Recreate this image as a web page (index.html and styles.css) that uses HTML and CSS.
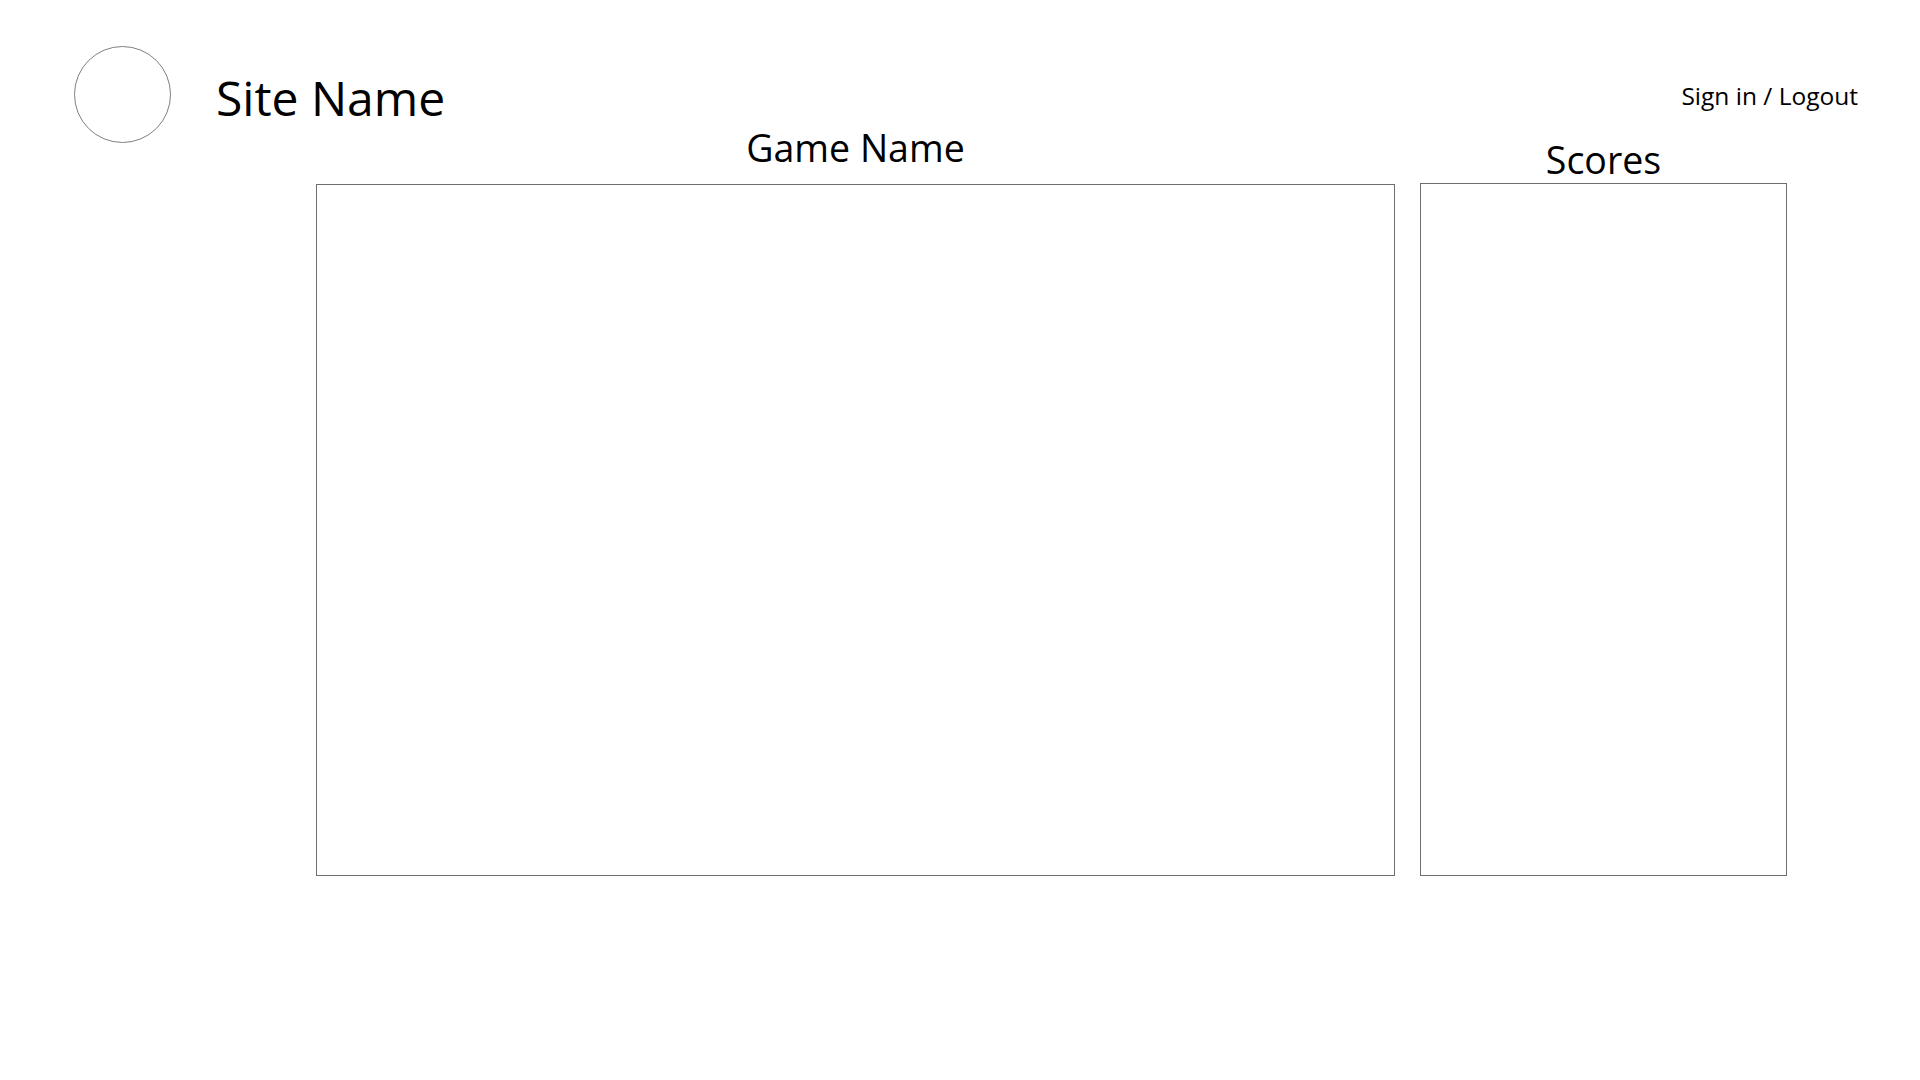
FILE: index.html
```html
<!DOCTYPE html>
<html lang="en">
<head>
<meta charset="utf-8">
<title>Site Name</title>
<link rel="stylesheet" href="styles.css">
</head>
<body>
<header class="site-header">
  <div class="logo"></div>
  <h1 class="site-name">Site Name</h1>
  <a class="auth-link" href="#">Sign in / Logout</a>
</header>
<main class="content">
  <section class="game-col">
    <h2 class="col-title">Game Name</h2>
    <div class="panel"></div>
  </section>
  <section class="scores-col">
    <h2 class="col-title">Scores</h2>
    <div class="panel"></div>
  </section>
</main>
</body>
</html>
```
FILE: styles.css
```css
html, body {
  margin: 0;
  padding: 0;
  background: #ffffff;
}
body {
  font-family: "Open Sans", "Noto Sans", sans-serif;
  color: #000;
  width: 1920px;
  height: 1080px;
  overflow: hidden;
}
.site-header {
  display: flex;
  align-items: center;
  height: 97px;
  padding: 46px 62px 0 74px;
}
.logo {
  width: 95px;
  height: 95px;
  border: 1px solid #808080;
  border-radius: 50%;
  flex: none;
}
.site-name {
  margin: 0 0 0 45px;
  font-size: 48px;
  font-weight: 400;
  line-height: 1;
  padding-top: 6px;
}
.auth-link {
  margin-left: auto;
  font-size: 24.5px;
  color: #000;
  text-decoration: none;
  line-height: 1;
  padding-top: 4px;
}
.content {
  display: flex;
  gap: 25px;
  margin: -17px 0 0 316px;
  height: 750px;
}
.game-col,
.scores-col {
  display: flex;
  flex-direction: column;
}
.game-col { width: 1079px; }
.scores-col { width: 367px; }
.col-title {
  margin: 0;
  font-size: 37.5px;
  font-weight: 400;
  line-height: 44px;
  text-align: center;
}
.game-col .col-title { margin-bottom: 14px; }
.scores-col .col-title { margin: 12px 0 1px; }
.panel {
  flex: 1;
  border: 1px solid #6e6e6e;
}
```
